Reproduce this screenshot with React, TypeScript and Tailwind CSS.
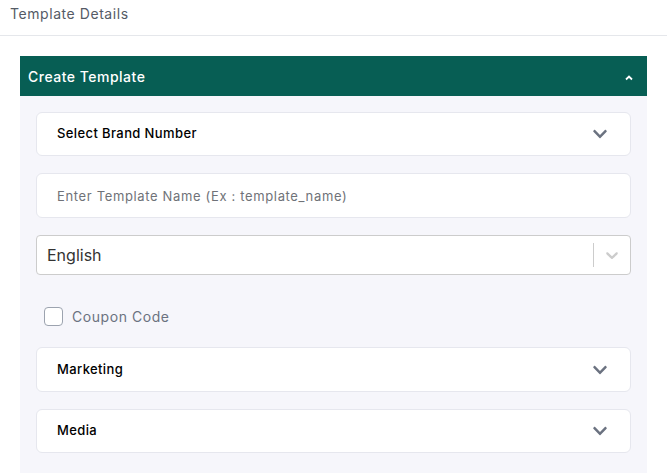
import { FaChevronDown } from "react-icons/fa";

function SectionCard({ title, tall }: { title: string; tall?: boolean }) {
  return (
    <div
      className={`flex items-center justify-between rounded-[6px] border border-[#e6e7ee] bg-white pl-[20px] pr-[22px] ${
        tall ? "h-[45px]" : "h-[44px]"
      }`}
    >
      <span className="text-[13px] font-medium tracking-[0.03em] text-black">{title}</span>
      <FaChevronDown className="text-[#6b7280]" size={16} />
    </div>
  );
}

export default function App() {
  return (
    <div className="min-h-screen bg-white font-['Inter',sans-serif]">
      {/* Page title */}
      <div className="h-[36px] border-b border-[#e5e7eb] px-[10px] pt-[4px]">
        <h1 className="text-[14px] leading-5 tracking-[0.04em] text-[#555b66]">Template Details</h1>
      </div>

      <div className="mx-[20px] mt-[20px]">
        {/* Accordion header */}
        <div className="flex h-[40px] items-center justify-between bg-[#075e54] px-[8px]">
          <span className="text-[14px] font-medium tracking-[0.035em] text-white">Create Template</span>
          <svg width="10" height="8" viewBox="0 0 10 8" className="mr-[5px] mt-[4px]">
            <path d="M2 5.5 L5 2.5 L8 5.5" stroke="#fff" strokeWidth="1.8" fill="none" />
          </svg>
        </div>

        {/* Accordion body */}
        <div className="flex flex-col gap-[17px] bg-[#f6f6fb] px-[16px] pb-[20px] pt-[16px]">
          <SectionCard title="Select Brand Number" />

          <input
            className="h-[45px] rounded-[6px] border border-[#e6e7ee] bg-white pl-[20px] text-[13px] tracking-[0.05em] text-[#333] outline-none placeholder:text-[#6f7278]"
            placeholder="Enter Template Name (Ex : template_name)"
          />

          {/* Language select */}
          <div className="flex h-[40px] items-center rounded-[4px] border border-[#cccccc] bg-white">
            <span className="flex-1 pl-[10px] text-[16px] text-[#333]">English</span>
            <span className="h-[24px] w-px bg-[#cccccc]" />
            <div className="p-[8px]">
              <svg width="20" height="20" viewBox="0 0 20 20" fill="#cccccc">
                <path d="M4.516 7.548c0.436-0.446 1.043-0.481 1.576 0l3.908 3.747 3.908-3.747c0.533-0.481 1.141-0.446 1.574 0 0.436 0.445 0.408 1.197 0 1.615-0.406 0.418-4.695 4.502-4.695 4.502-0.217 0.223-0.502 0.335-0.787 0.335s-0.57-0.112-0.789-0.335c0 0-4.287-4.084-4.695-4.502s-0.436-1.17 0-1.615z" />
              </svg>
            </div>
          </div>

          {/* Coupon checkbox */}
          <div className="h-[38px] pl-[8px] pt-[15px]">
            <label className="flex h-[19px] items-center gap-[9px]">
              <span className="h-[19px] w-[19px] rounded-[4px] border border-[#9ca3af] bg-white" />
              <span className="text-[14px] tracking-[0.04em] text-[#6b7280]">Coupon Code</span>
            </label>
          </div>

          <SectionCard title="Marketing" tall />
          <SectionCard title="Media" />
        </div>
      </div>
    </div>
  );
}
